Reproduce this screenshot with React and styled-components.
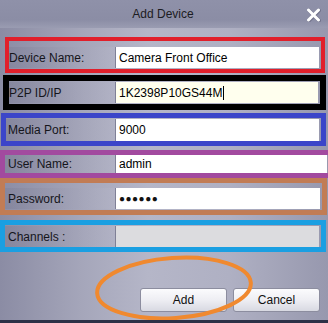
import React from "react";
import styled, { createGlobalStyle } from "styled-components";

const GlobalStyle = createGlobalStyle`
  html, body {
    margin: 0;
    padding: 0;
    background: #2d3147;
  }
  body {
    font-family: "Liberation Sans", Arial, sans-serif;
  }
`;

const Dialog = styled.div`
  position: relative;
  width: 328px;
  height: 323px;
  overflow: hidden;
  display: flex;
  flex-direction: column;
  background: linear-gradient(
    90deg,
    #8b8ca4 0%,
    #a5a6ba 25%,
    #b5b6c8 45%,
    #afb0c3 70%,
    #9798ae 100%
  );
  border-bottom: 3px solid #2d3147;
  box-sizing: border-box;
`;

const TitleBar = styled.div`
  position: relative;
  height: 28px;
  flex: none;
  display: flex;
  align-items: center;
  justify-content: center;
  background: linear-gradient(180deg, #8f91a9 0%, #8b8da5 70%, #9a9cb2 100%);
`;

const Title = styled.span`
  font-size: 12px;
  color: #1c1c22;
  margin-left: -2px;
`;

const CloseButton = styled.button`
  position: absolute;
  right: 6px;
  top: 6px;
  width: 17px;
  height: 17px;
  padding: 0;
  border: none;
  background: none;
  display: flex;
  align-items: center;
  justify-content: center;
`;

const Body = styled.div`
  display: flex;
  flex-direction: column;
`;

const Row = styled.div`
  display: flex;
  box-sizing: border-box;
  height: ${(p) => p.$h}px;
  margin-top: ${(p) => p.$mt}px;
  margin-left: ${(p) => p.$left}px;
  margin-right: ${(p) => p.$right}px;
  border: ${(p) => p.$bw}px solid ${(p) => p.$color};
  padding-top: ${(p) => p.$pt}px;
  padding-bottom: ${(p) => p.$pb}px;
`;

const Label = styled.div`
  flex: none;
  box-sizing: border-box;
  width: ${(p) => p.$w}px;
  padding-left: ${(p) => p.$pl}px;
  display: flex;
  align-items: center;
  font-size: 12px;
  color: #15151b;
  white-space: nowrap;
  background: linear-gradient(90deg, rgba(120, 121, 145, 0.35), rgba(190, 191, 208, 0.25));
  border-right: 1px solid #7f8096;
`;

const Field = styled.div`
  flex: 1;
  margin-right: 2px;
  display: flex;
  align-items: center;
  padding-left: 3px;
  font-size: 12px;
  color: #000;
  background: ${(p) => p.$bg || "#ffffff"};
`;

const Dots = styled.span`
  font-size: 10px;
  letter-spacing: 0.5px;
  color: #111;
`;

const Caret = styled.span`
  display: inline-block;
  width: 1px;
  height: 14px;
  margin-left: 1px;
  background: #000;
`;

const Footer = styled.div`
  position: relative;
  flex: 1;
  display: flex;
  justify-content: flex-end;
  align-items: flex-end;
  gap: 6px;
  padding: 0 8px 8px 0;
`;

const Button = styled.button`
  width: 87px;
  height: 24px;
  border: 1px solid #8c8d9f;
  border-radius: 3px;
  background: linear-gradient(180deg, #fbfbfd 0%, #eeeef3 50%, #d8d9e2 100%);
  font-family: "Liberation Sans", Arial, sans-serif;
  font-size: 12px;
  color: #111;
  padding: 0;
`;

const Highlight = styled.svg`
  position: absolute;
  left: 90px;
  top: 1px;
  pointer-events: none;
`;

const rows = [
  { label: "Device Name:", value: "Camera Front Office", color: "#e11f2b", mt: 9, h: 36, left: 5, right: 3, bw: 4, pt: 6, pb: 1 },
  { label: "P2P ID/IP", value: "1K2398P10GS44M", color: "#000000", mt: 2, h: 35, left: 3, right: 2, bw: 6, pt: 1, pb: 1, bg: "#ffffee", caret: true },
  { label: "Media Port:", value: "9000", color: "#3b45c9", mt: 3, h: 33, left: 1, right: 2, bw: 5, pt: 1, pb: 0 },
  { label: "User Name:", value: "admin", color: "#a24a9f", mt: 4, h: 28, left: 0, right: -6, bw: 5, pt: 0, pb: 0 },
  { label: "Password:", value: "●●●●●●", color: "#c17c55", mt: 0, h: 37, left: 0, right: 1, bw: 5, pt: 5, pb: 1, dots: true },
  { label: "Channels :", value: "", color: "#1a9fe2", mt: 5, h: 32, left: 0, right: 2, bw: 5, pt: 1, pb: 0, bg: "#dcdcdf" },
];

export default function App() {
  return (
    <>
      <GlobalStyle />
      <Dialog>
        <TitleBar>
          <Title>Add Device</Title>
          <CloseButton aria-label="Close">
            <svg width="15" height="14" viewBox="0 0 15 14">
              <path d="M2.5 2 L12.5 12 M12.5 2 L2.5 12" stroke="#6f7088" strokeWidth="3.6" strokeLinecap="round" transform="translate(0.6 0.6)" />
              <path d="M2.5 2 L12.5 12 M12.5 2 L2.5 12" stroke="#ffffff" strokeWidth="3" strokeLinecap="round" />
            </svg>
          </CloseButton>
        </TitleBar>
        <Body>
          {rows.map((r) => (
            <Row
              key={r.label}
              $color={r.color}
              $mt={r.mt}
              $h={r.h}
              $left={r.left}
              $right={r.right}
              $bw={r.bw}
              $pt={r.pt}
              $pb={r.pb}
            >
              <Label $w={116 - r.left - r.bw} $pl={Math.max(0, 8 - r.left - r.bw)}>
                {r.label}
              </Label>
              <Field $bg={r.bg}>
                {r.dots ? <Dots>{r.value}</Dots> : r.value}
                {r.caret && <Caret />}
              </Field>
            </Row>
          ))}
        </Body>
        <Footer>
          <Button>Add</Button>
          <Button>Cancel</Button>
          <Highlight width="170" height="70" viewBox="0 0 170 70">
            <ellipse cx="84" cy="35" rx="77" ry="30" fill="none" stroke="#f0892f" strokeWidth="4" transform="rotate(-4 84 35)" />
          </Highlight>
        </Footer>
      </Dialog>
    </>
  );
}
